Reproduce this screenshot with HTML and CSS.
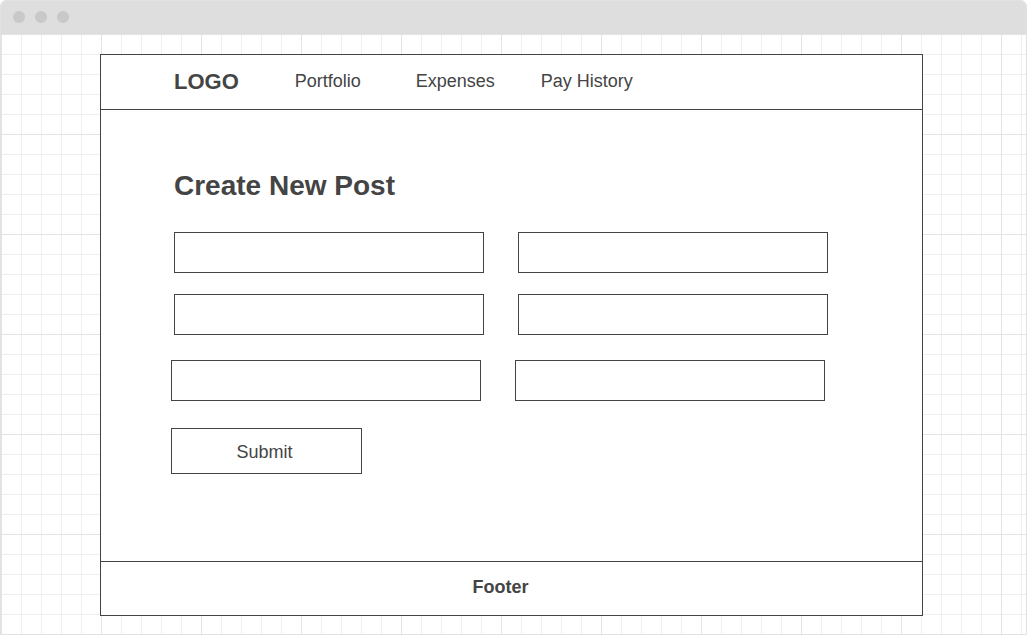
FILE: index.html
```html
<!DOCTYPE html>
<html>

<head>
  <title>Create New Post</title>
  <link rel="stylesheet" href="styles.css">
</head>

<body>
  <div class="window">
    <div class="titlebar">
      <span class="dot"></span>
      <span class="dot"></span>
      <span class="dot"></span>
    </div>
    <div class="canvas">
      <div class="page">
        <header class="header">
          <div class="logo">LOGO</div>
          <nav class="nav">
            <a class="nav-portfolio" href="#">Portfolio</a>
            <a class="nav-expenses" href="#">Expenses</a>
            <a href="#">Pay History</a>
          </nav>
        </header>

        <main class="main">
          <h1 class="title">Create New Post</h1>
          <form class="post-form">
            <div class="form-row">
              <input class="field" type="text">
              <input class="field" type="text">
            </div>
            <div class="form-row">
              <input class="field" type="text">
              <input class="field" type="text">
            </div>
            <div class="form-row form-row-shift">
              <input class="field" type="text">
              <input class="field" type="text">
            </div>
            <button class="submit" type="button">Submit</button>
          </form>
        </main>

        <footer class="footer">Footer</footer>
      </div>
    </div>
  </div>
</body>

</html>
```

FILE: styles.css
```css
* {
  box-sizing: border-box;
}

body {
  margin: 0;
  font-family: "Liberation Sans", Arial, sans-serif;
  color: #444;
  background: #fff;
}

.window {
  width: 1027px;
  height: 635px;
  border: 1px solid #e2e2e2;
  border-radius: 6px 6px 0 0;
  overflow: hidden;
  display: flex;
  flex-direction: column;
}

.titlebar {
  height: 33px;
  background-color: #dedede;
  display: flex;
  align-items: center;
  gap: 10px;
  padding-left: 12px;
  padding-bottom: 1px;
}

.dot {
  width: 12px;
  height: 12px;
  border-radius: 50%;
  background-color: #c9c9c9;
}

.canvas {
  flex: 1;
  padding: 20px 0 0 99px;
  background-color: #fff;
  background-image:
    linear-gradient(to right, #e4e4e4 1px, transparent 1px),
    linear-gradient(to bottom, #e4e4e4 1px, transparent 1px),
    linear-gradient(to right, #efefef 1px, transparent 1px),
    linear-gradient(to bottom, #efefef 1px, transparent 1px);
  background-size: 100px 100px, 100px 100px, 20px 20px, 20px 20px;
}

.page {
  width: 823px;
  height: 562px;
  border: 1px solid #444;
  background: #fff;
  display: flex;
  flex-direction: column;
}

.header {
  height: 55px;
  border-bottom: 1px solid #444;
  display: flex;
  align-items: center;
  padding-left: 73px;
}

.logo {
  font-size: 22px;
  font-weight: bold;
  margin-right: 56px;
}

.nav {
  display: flex;
  padding-bottom: 2px;
}

.nav a {
  font-size: 18px;
  color: #444;
  text-decoration: none;
}

.nav .nav-portfolio {
  width: 121px;
}

.nav .nav-expenses {
  width: 125px;
}

.main {
  flex: 1;
  padding: 60px 0 0 73px;
}

.title {
  margin: 0 0 30px;
  font-size: 28px;
  line-height: 32px;
  font-weight: bold;
}

.form-row {
  display: flex;
  gap: 34px;
  margin-bottom: 21px;
}

.form-row-shift {
  margin: 25px 0 27px -3px;
}

.field {
  width: 310px;
  height: 41px;
  border: 1px solid #444;
  border-radius: 0;
  background: #fff;
  margin: 0;
  font: inherit;
}

.submit {
  display: block;
  width: 191px;
  height: 46px;
  margin-left: -3px;
  border: 1px solid #444;
  border-radius: 0;
  background: #fff;
  color: #444;
  font-family: "Liberation Sans", Arial, sans-serif;
  font-size: 18px;
  padding: 2px 4px 0 0;
}

.footer {
  height: 54px;
  border-top: 1px solid #444;
  display: flex;
  align-items: center;
  justify-content: center;
  padding: 0 22px 2px 0;
  font-size: 18px;
  font-weight: bold;
}
```
